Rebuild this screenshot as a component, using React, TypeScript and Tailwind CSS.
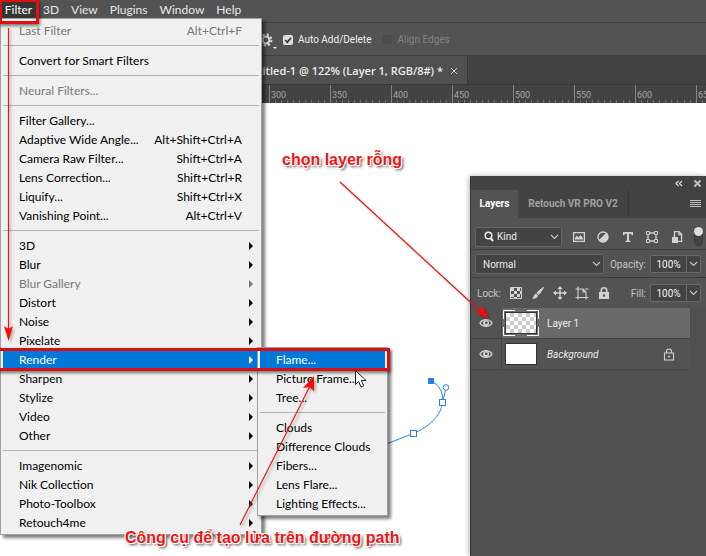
import type { ReactNode } from 'react'

type Item = { label: string; keys?: string; sub?: boolean; disabled?: boolean; active?: boolean }

const menus = ['3D', 'View', 'Plugins', 'Window', 'Help']

const filterMenu: Item[][] = [
  [{ label: 'Last Filter', keys: 'Alt+Ctrl+F', disabled: true }],
  [{ label: 'Convert for Smart Filters' }],
  [{ label: 'Neural Filters...', disabled: true }],
  [
    { label: 'Filter Gallery...' },
    { label: 'Adaptive Wide Angle...', keys: 'Alt+Shift+Ctrl+A' },
    { label: 'Camera Raw Filter...', keys: 'Shift+Ctrl+A' },
    { label: 'Lens Correction...', keys: 'Shift+Ctrl+R' },
    { label: 'Liquify...', keys: 'Shift+Ctrl+X' },
    { label: 'Vanishing Point...', keys: 'Alt+Ctrl+V' },
  ],
  [
    { label: '3D', sub: true },
    { label: 'Blur', sub: true },
    { label: 'Blur Gallery', sub: true, disabled: true },
    { label: 'Distort', sub: true },
    { label: 'Noise', sub: true },
    { label: 'Pixelate', sub: true },
    { label: 'Render', sub: true, active: true },
    { label: 'Sharpen', sub: true },
    { label: 'Stylize', sub: true },
    { label: 'Video', sub: true },
    { label: 'Other', sub: true },
  ],
  [
    { label: 'Imagenomic', sub: true },
    { label: 'Nik Collection', sub: true },
    { label: 'Photo-Toolbox', sub: true },
    { label: 'Retouch4me', sub: true },
  ],
]

const renderMenu: Item[][] = [
  [{ label: 'Flame...', active: true }, { label: 'Picture Frame...' }, { label: 'Tree...' }],
  [
    { label: 'Clouds' },
    { label: 'Difference Clouds' },
    { label: 'Fibers...' },
    { label: 'Lens Flare...' },
    { label: 'Lighting Effects...' },
  ],
]

const rulerMarks = [300, 350, 400, 450, 500, 550, 600, 650]

const MenuRow = ({ item, children }: { item: Item; children?: ReactNode }) => (
  <li className="relative">
    <button
      type="button"
      disabled={item.disabled}
      className={`flex h-[19px] w-full items-center justify-between pr-[5px] pl-4 text-xs whitespace-nowrap ${
        item.active ? 'bg-[#0078d7] text-white' : item.disabled ? 'text-[#777777]' : 'text-black'
      }`}
    >
      <span>{item.label}</span>
      {item.keys && <span className="pr-3">{item.keys}</span>}
      {item.sub && (
        <svg width="6" height="8" viewBox="0 0 6 8" fill="currentColor">
          <path d="M1 0L5 4L1 8Z" />
        </svg>
      )}
    </button>
    {children}
  </li>
)

const MenuList = ({ groups, submenu }: { groups: Item[][]; submenu?: ReactNode }) => (
  <div className="border border-[#a0a0a0] bg-[#f0f0f0] p-[2px] shadow-[3px_3px_3px_rgba(0,0,0,0.5)]">
    {groups.map((group, i) => (
      <ul key={i} className={i > 0 ? 'mt-[5px] border-t border-[#b4b4b4] pt-[5px]' : ''}>
        {group.map((item) => (
          <MenuRow key={item.label} item={item}>
            {item.active && submenu}
          </MenuRow>
        ))}
      </ul>
    ))}
  </div>
)

const Chevron = () => (
  <svg width="9" height="6" viewBox="0 0 9 6" fill="none" stroke="#c8c8c8" strokeWidth="1.1">
    <path d="M1 1L4.500 4.500L8 1" />
  </svg>
)

const Percent = ({ id, label }: { id: string; label: string }) => (
  <div className="ml-auto flex items-center gap-1">
    <label htmlFor={id} className="text-[#c4c4c4]">
      {label}
    </label>
    <div className="flex h-[18px] w-[51px] rounded-xs border border-[#686868] bg-[#434343]">
      <input id={id} defaultValue="100%" className="w-[35px] bg-transparent text-center text-[#f0f0f0] outline-none" />
      <button type="button" aria-label={`${label} slider`} className="flex flex-1 items-center justify-center border-l border-[#686868]">
        <Chevron />
      </button>
    </div>
  </div>
)

const IconButton = ({ label, children }: { label: string; children: ReactNode }) => (
  <button type="button" aria-label={label} className="shrink-0">
    <svg width="14" height="14" viewBox="0 0 14 14" fill="none" stroke="#d2d2d2" strokeWidth="1.3">
      {children}
    </svg>
  </button>
)

const Eye = () => (
  <svg width="14" height="10" viewBox="0 0 14 10">
    <path d="M1 5C3.500 0.500 10.500 0.500 13 5C10.500 9.500 3.500 9.500 1 5Z" fill="none" stroke="#d6d6d6" strokeWidth="1.400" />
    <circle cx="7" cy="5" r="3" fill="#d6d6d6" />
    <circle cx="7.300" cy="4.700" r="1.300" fill="#4a4a4a" />
  </svg>
)

const Header = () => (
  <header className="bg-[#535353]">
    <nav className="flex h-[22px] items-center text-xs text-[#e8e8e8]">
      <button type="button" className="mr-[6px] h-full w-[37px] bg-[#343434] pb-[2px] text-white">
        Filter
      </button>
      <div className="flex gap-3 pb-[2px]">
        {menus.map((name) => (
          <button key={name} type="button">
            {name}
          </button>
        ))}
      </div>
    </nav>
    <div className="flex h-[34px] items-center border-y border-[#404040] pt-px pl-[259px] font-[Roboto,sans-serif] text-[10px]">
      <button type="button" aria-label="Path options" className="flex items-end">
        <svg width="14" height="14" viewBox="0 0 14 14" fill="none" stroke="#d6d6d6">
          <circle cx="7" cy="7" r="3.500" strokeWidth="2.200" />
          <circle cx="7" cy="7" r="5.500" strokeWidth="2" strokeDasharray="2.160 2.160" />
        </svg>
        <svg width="4" height="3" viewBox="0 0 4 3" className="-mb-[3px]">
          <path d="M0 0H4L2 2Z" fill="#eeeeee" />
        </svg>
      </button>
      <label className="ml-[6px] flex items-center gap-[5px] text-[#eeeeee]">
        <span className="relative flex size-[10px]">
          <input type="checkbox" defaultChecked className="size-[10px] appearance-none rounded-xs bg-[#dedede]" />
          <svg width="10" height="10" viewBox="0 0 10 10" className="pointer-events-none absolute inset-0">
            <path d="M2.200 5L4.300 7.300L8 2.700" fill="none" stroke="#303030" strokeWidth="1.700" />
          </svg>
        </span>
        Auto Add/Delete
      </label>
      <label className="ml-3 flex items-center gap-[5px] text-[#828282]">
        <input type="checkbox" disabled className="size-[9px] appearance-none rounded-xs border border-[#494949] bg-[#4d4d4d]" />
        Align Edges
      </label>
    </div>
    <div className="flex h-[29px] border-b border-[#383838] bg-[#424242]">
      <div className="flex w-[468px] items-center justify-end gap-[7px] border-r border-[#383838] bg-[#505050] pt-[2px] pr-[9px] font-['Open_Sans','Noto_Sans',sans-serif] text-[11px] font-semibold whitespace-nowrap text-[#ececec]">
        Untitled-1 @ 122% (Layer 1, RGB/8#) *
        <button type="button" aria-label="Close document">
          <svg width="8" height="8" viewBox="0 0 8 8" stroke="#c4c4c4" strokeWidth="1">
            <path d="M1 1L7 7M7 1L1 7" />
          </svg>
        </button>
      </div>
    </div>
    <div className="flex h-[18px] overflow-hidden bg-[#434343] pl-[269px] font-[Roboto,sans-serif] text-[9px] text-[#a5a5a5]">
      {rulerMarks.map((mark) => (
        <div key={mark} className="relative w-[61px] shrink-0 border-l border-[#858585] pl-[1px] leading-[20px]">
          {mark}
          <svg width="61" height="3" viewBox="0 0 61 3" className="absolute bottom-0 left-0" stroke="#707070" strokeWidth="1">
            <path d="M5.500 0V3M11.500 0V3M17.500 0V3M23.500 0V3M29.500 0V3M35.500 0V3M41.500 0V3M48.500 0V3M54.500 0V3" />
          </svg>
        </div>
      ))}
    </div>
  </header>
)

const LayersPanel = () => (
  <aside className="ml-auto mt-[73px] flex w-[236px] flex-col border-l border-[#383838] bg-[#505050] font-[Roboto,sans-serif] text-[10px] shadow-[-1px_0_5px_rgba(0,0,0,0.3)]">
    <div className="flex h-[14px] items-center justify-end gap-[11px] rounded-tl-sm bg-[#434343] pr-[5px]">
      <svg width="8" height="7" viewBox="0 0 8 7" fill="none" stroke="#dddddd" strokeWidth="1.200">
        <path d="M3.500 1L1 3.500L3.500 6M7 1L4.500 3.500L7 6" />
      </svg>
      <svg width="7" height="7" viewBox="0 0 7 7" stroke="#c0c0c0" strokeWidth="2">
        <path d="M0.500 0.500L6.500 6.500M6.500 0.500L0.500 6.500" />
      </svg>
    </div>
    <div className="flex h-7 bg-[#434343] font-bold whitespace-nowrap">
      <button type="button" className="w-[47px] bg-[#535353] pb-[2px] text-white">
        Layers
      </button>
      <button type="button" className="w-[111px] border-r border-[#383838] pb-[2px] text-[#a0a0a0]">
        Retouch VR PRO V2
      </button>
      <button type="button" aria-label="Panel menu" className="ml-auto pr-[5px]">
        <svg width="11" height="8" viewBox="0 0 11 8" stroke="#c0c0c0" strokeWidth="1">
          <path d="M0 0.500H11M0 2.500H11M0 4.500H11M0 6.500H11" />
        </svg>
      </button>
    </div>
    <div className="flex h-8 items-center border-b border-[#3d3d3d] bg-[#535353] pt-[6px] pr-[3px] pl-1">
      <div className="relative flex w-[87px] items-center">
        <select aria-label="Filter type" className="h-5 w-full appearance-none rounded-xs border border-[#646464] bg-[#434343] pl-[21px] text-[#ececec]">
          <option>Kind</option>
        </select>
        <svg width="11" height="11" viewBox="0 0 11 11" className="pointer-events-none absolute left-2" fill="none" stroke="#eeeeee">
          <circle cx="5.500" cy="4.500" r="3.300" strokeWidth="1.500" />
          <path d="M7.500 7L10 10" strokeWidth="2" />
        </svg>
        <span className="pointer-events-none absolute right-[3px]">
          <Chevron />
        </span>
      </div>
      <div className="ml-[10px] flex flex-1 items-center justify-between">
        <IconButton label="Pixel layers">
          <path d="M1.600 2.600H12.400V11.400H1.600Z" />
          <path d="M3 9.500V8L5 5.500L6.500 7.500L8.500 5L11 8V9.500Z" fill="#d2d2d2" stroke="none" />
        </IconButton>
        <IconButton label="Adjustment layers">
          <circle cx="7" cy="7" r="5" />
          <path d="M10.500 3.500A5 5 0 0 1 3.500 10.500Z" fill="#d2d2d2" />
        </IconButton>
        <IconButton label="Type layers">
          <path d="M2 2H12V5.200H10.700L10.200 3.700H8.100V10.500L9.500 11V12H4.500V11L5.900 10.500V3.700H3.800L3.300 5.200H2Z" fill="#d2d2d2" stroke="none" />
        </IconButton>
        <IconButton label="Shape layers">
          <path d="M3 3H11V11H3Z" />
          <path d="M1.500 1.500H4.500V4.500H1.500ZM9.500 1.500H12.500V4.500H9.500ZM1.500 9.500H4.500V12.500H1.500ZM9.500 9.500H12.500V12.500H9.500Z" fill="#535353" strokeWidth="1" />
        </IconButton>
        <IconButton label="Smart objects">
          <path d="M4.500 7V1.600H9L11.600 4.200V11.400H7M9 1.600V4.500H11.600" />
          <path d="M2 7H8V13H2Z" fill="#d2d2d2" stroke="none" />
        </IconButton>
        <label className="relative flex">
          <input type="checkbox" role="switch" aria-label="Layer filtering" className="h-[19px] w-[9px] appearance-none rounded-full border border-[#393939] bg-[#434343]" />
          <span className="pointer-events-none absolute top-0 left-0 size-[9px] rounded-full bg-[#dcdcdc]" />
        </label>
      </div>
    </div>
    <div className="flex h-7 items-center border-b border-[#3d3d3d] bg-[#535353] pt-px pr-[5px] pl-1">
      <div className="relative flex w-[129px] items-center">
        <select aria-label="Blend mode" className="h-5 w-full appearance-none rounded-xs border border-[#646464] bg-[#434343] pl-[7px] text-[#ececec]">
          <option>Normal</option>
        </select>
        <span className="pointer-events-none absolute right-[3px]">
          <Chevron />
        </span>
      </div>
      <Percent id="opacity" label="Opacity:" />
    </div>
    <div className="flex h-[30px] items-center bg-[#535353] pr-[5px] pl-[6px]">
      <span className="w-8 text-[#c4c4c4]">Lock:</span>
      <div className="flex gap-2">
        <IconButton label="Lock transparent pixels">
          <path d="M1.500 1.500H12.500V12.500H1.500Z" strokeWidth="1" />
          <path d="M2 2H5V5H2ZM8 2H11V5H8ZM5 5H8V8H5ZM11 5H12V8H11ZM2 8H5V11H2ZM8 8H11V11H8ZM5 11H8V12H5Z" fill="#d2d2d2" stroke="none" />
        </IconButton>
        <IconButton label="Lock image pixels">
          <path d="M13 1C13.500 1.500 9 8 7.500 9L5.500 7.200C6.500 5.500 12 0.500 13 1ZM5 7.800L7 9.600C6.500 12 4 13.200 1 12.800C3 12 2.500 8 5 7.800Z" fill="#d2d2d2" stroke="none" />
        </IconButton>
        <IconButton label="Lock position">
          <path d="M7 2V12M2 7H12" />
          <path d="M7 0L9.500 3H4.500ZM7 14L9.500 11H4.500ZM0 7L3 4.500V9.500ZM14 7L11 4.500V9.500Z" fill="#d2d2d2" stroke="none" />
        </IconButton>
        <IconButton label="Prevent auto-nesting">
          <path d="M3 0.500V13.500M0.500 3H8L11 6V13.500M0.500 11.500H13.500M8 3V6H11M10 3H13.500" strokeWidth="1.100" />
        </IconButton>
        <IconButton label="Lock all">
          <path d="M4.300 6V4.500A2.700 2.700 0 0 1 9.700 4.500V6" strokeWidth="1.600" />
          <path d="M2 6H12V13H2Z" fill="#d2d2d2" stroke="none" />
          <circle cx="7" cy="9.500" r="1.200" fill="#535353" stroke="none" />
        </IconButton>
      </div>
      <Percent id="fill" label="Fill:" />
    </div>
    <ul className="mr-4 text-[#ececec]">
      <li className="flex h-[31px] items-center border-b border-[#434343] bg-[#535353]">
        <button type="button" aria-label="Toggle Layer 1" className="flex h-full w-[31px] items-center justify-center border-r border-[#444444]">
          <Eye />
        </button>
        <div className="flex h-full flex-1 items-center gap-2 bg-[#6a6a6a] pl-[1px]">
          <div className="relative flex h-[26px] w-[36px] items-center justify-center">
            <div className="h-[22px] w-8 border border-[#333333] bg-white bg-[repeating-conic-gradient(#cccccc_0_25%,#ffffff_0_50%)] bg-size-[8px_8px]" />
            <svg width="36" height="26" viewBox="0 0 36 26" className="absolute inset-0" fill="none" stroke="#ffffff" strokeWidth="1">
              <path d="M0.500 9V0.500H12M24 0.500H35.500V9M35.500 17V25.500H24M12 25.500H0.500V17" />
            </svg>
          </div>
          Layer 1
        </div>
      </li>
      <li className="flex h-[31px] items-center border-b border-[#474747] bg-[#535353]">
        <button type="button" aria-label="Toggle Background" className="flex h-full w-[31px] items-center justify-center border-r border-[#444444]">
          <Eye />
        </button>
        <div className="flex flex-1 items-center gap-[10px] pr-[15px] pl-[3px]">
          <div className="h-[22px] w-8 border border-[#333333] bg-white" />
          <span className="italic">Background</span>
          <svg width="12" height="13" viewBox="0 0 12 13" className="ml-auto" fill="none" stroke="#d2d2d2" strokeWidth="1.100">
            <path d="M1.500 5H10.500V12H1.500ZM3.500 5V3.500A2.500 2.500 0 0 1 8.500 3.500V5" />
            <circle cx="6" cy="8.500" r="1" fill="#d2d2d2" stroke="none" />
          </svg>
        </div>
      </li>
    </ul>
  </aside>
)

// Path being edited on the canvas
const CanvasPath = () => (
  <svg width="70" height="76" viewBox="0 0 70 76" className="absolute top-[374px] left-[384px]" fill="none" stroke="#2a83d8">
    <path d="M0 71L29 59.500C45 53 57 42 58.500 28.500C60 18 54 10 47 7" />
    <path d="M58.500 28.500L62 14" />
    <rect x="44.500" y="4.500" width="5" height="5" fill="#1681e8" />
    <circle cx="62" cy="13.500" r="2.800" fill="#ffffff" />
    <rect x="55.500" y="25.500" width="6" height="6" fill="#ffffff" />
    <rect x="26.500" y="56.500" width="6" height="6" fill="#ffffff" />
  </svg>
)

const Note = ({ className, children }: { className: string; children: ReactNode }) => (
  <p
    className={`absolute font-['Liberation_Sans',Arial,sans-serif] text-base leading-5 font-bold whitespace-nowrap text-[#f01414] [text-shadow:-1px_-1px_0_#fff,1px_-1px_0_#fff,-1px_1px_0_#fff,1px_1px_0_#fff,2px_2px_3px_#333] ${className}`}
  >
    {children}
  </p>
)

// Red arrows, highlight boxes and the mouse pointer, above everything else
const Annotations = () => (
  <div className="pointer-events-none absolute inset-0">
    <div className="absolute -top-px -left-px h-[25px] w-10 border-3 border-[#e01010] shadow-[1px_2px_3px_rgba(0,0,0,0.5)]" />
    <div className="absolute top-[348px] -left-[3px] h-[23px] w-[393px] border-3 border-[#d81014] shadow-[1px_2px_3px_rgba(0,0,0,0.5)]" />
    <svg width="500" height="556" viewBox="0 0 500 556" className="absolute top-0 left-0 drop-shadow-[2px_2px_1px_rgba(0,0,0,0.25)]" stroke="#e81818" strokeWidth="1.200">
      <path d="M8.500 28V332M340 182L480 311M240 525L311 384" />
      <path d="M8.500 341L4 326L8.500 329L13 326ZM489 319L475 312L480 311L482 305ZM314 376L303 388L309 387L314 391Z" fill="#ff0808" stroke="none" />
    </svg>
    <svg width="12" height="18" viewBox="0 0 12 18" className="absolute top-[370px] left-[355px]">
      <path d="M0.500 0.500V14.500L3.700 11.500L6 17L8.700 15.800L6.300 10.500H11Z" fill="#ffffff" stroke="#222222" />
    </svg>
    <Note className="top-[150px] left-[282px]">chọn layer rỗng</Note>
    <Note className="top-[528px] left-[125px]">Công cụ để tạo lửa trên đường path</Note>
  </div>
)

const App = () => (
  <div className="relative flex min-h-screen flex-col overflow-hidden bg-white font-[Lato,'Open_Sans',sans-serif]">
    <Header />
    <main className="flex flex-1">
      <LayersPanel />
    </main>
    <CanvasPath />
    <div className="absolute top-[18px] left-0 w-[262px]">
      <MenuList
        groups={filterMenu}
        submenu={
          <div className="absolute -top-[3px] left-[254px] w-[131px]">
            <MenuList groups={renderMenu} />
          </div>
        }
      />
    </div>
    <Annotations />
  </div>
)

export default App
